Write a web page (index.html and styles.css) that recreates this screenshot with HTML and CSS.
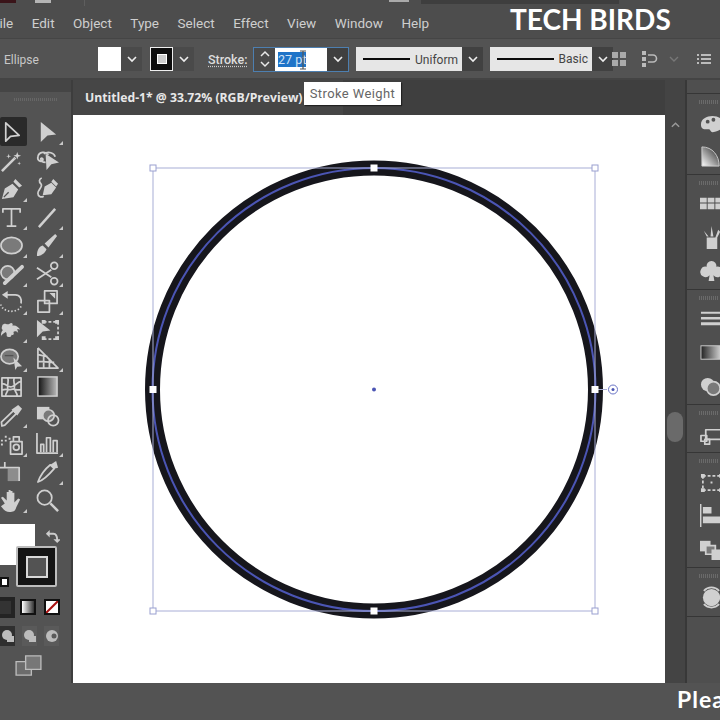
FILE: index.html
```html
<!DOCTYPE html>
<html lang="en">
<head>
<meta charset="utf-8">
<title>Illustrator</title>
<link rel="stylesheet" href="styles.css">
</head>
<body>
<div class="app">
  <div class="titlebar">
    <span class="tb-logo"></span><span class="tb-home"></span><span class="tb-sep"></span><span class="tb-arr"></span><span class="tb-field"></span>
  </div>
  <nav class="menubar">
    <span>File</span><span>Edit</span><span>Object</span><span>Type</span><span>Select</span><span>Effect</span><span>View</span><span>Window</span><span>Help</span>
  </nav>
  <div class="watermark">TECH BIRDS</div>

  <div class="control">
    <span class="ctl-name">Ellipse</span>
    <div class="swatch-group fill-group">
      <span class="swatch-white"></span>
      <span class="chev-btn"><svg viewBox="0 0 12 8" class="chev"><path d="M2 2l4 4 4-4"/></svg></span>
    </div>
    <div class="swatch-group stroke-group">
      <span class="swatch-stroke"><i></i></span>
      <span class="chev-btn"><svg viewBox="0 0 12 8" class="chev"><path d="M2 2l4 4 4-4"/></svg></span>
    </div>
    <span class="stroke-label">Stroke:</span>
    <div class="weight">
      <span class="spin"><svg viewBox="0 0 12 20" class="spin-i"><path d="M2 7l4-4 4 4M2 13l4 4 4-4"/></svg></span>
      <span class="weight-input"><span class="sel">27 pt</span></span>
      <span class="chev-btn weight-chev"><svg viewBox="0 0 12 8" class="chev"><path d="M2 2l4 4 4-4"/></svg></span>
      <svg class="ibeam" viewBox="0 0 8 20"><path d="M1 1h6M4 1v18M1 19h6"/></svg>
    </div>
    <div class="profile uniform"><span class="pline"></span><span class="ptext">Uniform</span></div>
    <span class="chev-btn profile-chev"><svg viewBox="0 0 12 8" class="chev"><path d="M2 2l4 4 4-4"/></svg></span>
    <div class="profile basic"><span class="pline"></span><span class="ptext">Basic</span></div>
    <span class="chev-btn profile-chev"><svg viewBox="0 0 12 8" class="chev"><path d="M2 2l4 4 4-4"/></svg></span>
    <svg class="ctl-grid" viewBox="0 0 16 16"><path d="M1 1h6v6H1zM9 1h6v6H9zM1 9h6v6H1zM9 9h6v6H9z"/></svg>
    <svg class="ctl-align" viewBox="0 0 18 18"><path class="solid" d="M1 1h4v4H1zM1 7h4v4H1zM1 13h4v4H1z"/><path class="line" d="M7 5h5a3 3 0 0 1 0 7H7"/></svg>
    <svg class="ctl-chev" viewBox="0 0 12 8"><path d="M2 2l4 4 4-4"/></svg>
    <svg class="ctl-list" viewBox="0 0 14 12"><path d="M0 1h2v2H0zM4 1h10v2H4zM0 5h2v2H0zM4 5h10v2H4zM0 9h2v2H0zM4 9h10v2H4z"/></svg>
  </div>

  <div class="workspace">
    <aside class="toolbox">
      <div class="tb-head"></div>
      <div class="grip tb-grip"></div>
      <div class="tools">
        <div class="tool active"><svg viewBox="0 0 24 24"><path class="o" d="M6 2v19l5-5 9-1z"/></svg></div>
        <div class="tool more"><svg viewBox="0 0 24 24"><path class="f" d="M5 1v21l7-7 9-1z"/></svg></div>
        <div class="tool"><svg viewBox="0 0 24 24"><path class="o thick" d="M2 23l13-13"/><path class="f" d="M15 8l2 2-1 1-2-2zM18 3l1 3 3 1-3 1-1 3-1-3-3-1 3-1zM9 5l.6 2 2 .6-2 .6-.6 2-.6-2-2-.6 2-.6zM20 13l.5 1.5 1.5.5-1.5.5-.5 1.5-.5-1.5-1.5-.5 1.5-.5z"/></svg></div>
        <div class="tool"><svg viewBox="0 0 24 24"><path class="o" d="M13 6c-3-4-10-3-11 2-1 4 3 6 5 4 1-2-1-3-2-2 0 3 2 4 5 4M8 5c5-3 11-1 12 3"/><path class="f" d="M10 5l14 9-8 2-5 6z"/></svg></div>
        <div class="tool more"><svg viewBox="0 0 24 24"><path class="f" d="M2 23l3-11 8-5 6 6-5 8zM14 5l2-3 7 7-3 2z"/><path class="d" d="M4 21l5-5"/></svg></div>
        <div class="tool"><svg viewBox="0 0 24 24"><path class="f" d="M7 19l2-9 7-4 5 5-5 7zM16 5l2-3 5 5-2 3z"/><path class="o" d="M6 1c-3 1-3 4-1 6 3 3-3 6-3 10 0 3 3 5 6 3"/></svg></div>
        <div class="tool more"><svg viewBox="0 0 24 24"><path class="o" d="M3 7V3h18v4M12 3v18M7 21h10"/></svg></div>
        <div class="tool more"><svg viewBox="0 0 24 24"><path class="o thick" d="M3 22L20 3"/></svg></div>
        <div class="tool more"><svg viewBox="0 0 24 24"><ellipse class="gf" cx="12" cy="12" rx="11" ry="8.5"/></svg></div>
        <div class="tool more"><svg viewBox="0 0 24 24"><path class="f" d="M1 23c0-6 2-10 6-11l4 4c-2 5-6 7-10 7zM9 10L20 0l2 2-9 12z"/></svg></div>
        <div class="tool more"><svg viewBox="0 0 24 24"><circle class="gf" cx="8" cy="11" r="7"/><path class="o thick wide" d="M5 22L23 5"/></svg></div>
        <div class="tool more"><svg viewBox="0 0 24 24"><circle class="o" cx="19" cy="4" r="3.5"/><circle class="o" cx="19" cy="20" r="3.5"/><path class="o" d="M1 6l15 10M1 18L16 8"/></svg></div>
        <div class="tool more"><svg viewBox="0 0 24 24"><path class="o" d="M7 5h9c5 0 7 5 6 9"/><path class="f" d="M8 1v8L2 5z"/><path class="o dash" d="M22 17c-3 6-14 7-19 2-1-1-2-3-2-4"/></svg></div>
        <div class="tool more"><svg viewBox="0 0 24 24"><path class="o" d="M2 11h12v12H2zM9 1h13v13H9z"/><path class="f" d="M20 3v6l-6-6z"/></svg></div>
        <div class="tool more"><svg viewBox="0 0 24 24"><path class="f" d="M3 6c2-3 4 1 7-1 2-2 4 0 3 2 3-1 6 1 8 4l-3-.5 1 4c-2-2-4-2-5-1 1 2 0 4-2 3 0 2-2 3-4 2-2-1 0-3-2-5-3 2-5 3-5 5 0-3 0-5 2-7-2-1-1-4 0-6z"/></svg></div>
        <div class="tool"><svg viewBox="0 0 24 24"><path class="f" d="M1 1v18l6-6 8-1z"/><path class="o dash2" d="M8 3h15v18H7"/><path class="f" d="M6 1h4v4H6zM20 1h4v4h-4zM20 18h4v4h-4zM6 18h4v4H6z"/></svg></div>
        <div class="tool more"><svg viewBox="0 0 24 24"><ellipse class="gf" cx="10" cy="10" rx="9" ry="7.5"/><path class="d" d="M5 9h9"/><path class="f" d="M14 11l9 9-5 .5-2 3.5z"/></svg></div>
        <div class="tool more"><svg viewBox="0 0 24 24"><path class="o" d="M2 1v21h21L2 1M2 8l10 2M2 15l17 1M8 8v14M14 13v9"/></svg></div>
        <div class="tool"><svg viewBox="0 0 24 24"><path class="o" d="M2 3h20v19H2zM2 9c6 0 6 5 11 3s6-6 9-5M8 3c2 4-1 7 0 11s-3 5-2 8M15 3c-2 3 1 7 0 10s3 5 3 9M2 16c4-2 6 0 10-1s6 2 10 0"/></svg></div>
        <div class="tool"><svg viewBox="0 0 24 24"><defs><linearGradient id="g1"><stop offset="0" stop-color="#111"/><stop offset="1" stop-color="#bbb"/></linearGradient></defs><rect class="grad" x="2" y="2" width="20" height="20" fill="url(#g1)"/></svg></div>
        <div class="tool more"><svg viewBox="0 0 24 24"><path class="o" d="M2 23l-.5-4L14 7l3 3L5 22z"/><path class="f" d="M12 6l7-5 4 4-5 7z"/></svg></div>
        <div class="tool"><svg viewBox="0 0 24 24"><rect class="f" x="1" y="3" width="13" height="13"/><circle class="gf" cx="13" cy="12" r="6"/><circle class="o" cx="18" cy="17" r="5.5"/></svg></div>
        <div class="tool more"><svg viewBox="0 0 24 24"><path class="f" d="M1 8h2v2H1zM5 8h2v2H5zM1 12h2v2H1zM5 4h2v2H5zM9 6h2v2H9z"/><path class="o" d="M11 10h12v13H11zM14 10V5h6v5"/><circle class="o" cx="17" cy="16" r="3"/></svg></div>
        <div class="tool more"><svg viewBox="0 0 24 24"><path class="o" d="M1 1v21h22"/><path class="o" d="M5 21V13h3v8M11 21V6h4v15M18 21V9h4v12"/></svg></div>
        <div class="tool"><svg viewBox="0 0 24 24"><path class="f dim" d="M8 9h12v13H8z"/><path class="o" d="M0 8h20v14M5 2v6"/></svg></div>
        <div class="tool more"><svg viewBox="0 0 24 24"><path class="o" d="M2 23c6-2 11-7 17-14l-4-4c-5 4-10 10-13 18z"/><path class="f" d="M15 5l6-4 2 7-4 1z"/></svg></div>
        <div class="tool more"><svg viewBox="0 0 24 24"><path class="f" d="M5 15L1 9l2-1 4 4V3h2v7V1h2v9V2h2v9V4h2v10l4-4 2 1-4 8c-1 4-3 5-7 5s-6-2-9-6z"/></svg></div>
        <div class="tool"><svg viewBox="0 0 24 24"><circle class="o" cx="9" cy="9" r="7.5"/><path class="o thick" d="M15 15l8 8"/></svg></div>
      </div>

      <div class="colors">
        <div class="fill-box"></div>
        <div class="stroke-box"><i></i></div>
        <svg class="swap" viewBox="0 0 16 16"><path d="M2 5h7c3 0 4 3 4 7"/><path class="h" d="M5 1v8L1 5zM9 11h8l-4 4z"/></svg>
        <span class="mini-default"><i></i></span>
      </div>
      <div class="mode-row">
        <span class="mode mode-dark"><i></i></span>
        <span class="mode mode-grad"><i></i></span>
        <span class="mode mode-none"><svg viewBox="0 0 14 14"><path d="M0 14L14 0"/></svg></span>
      </div>
      <div class="draw-row">
        <span class="draw draw-on"><svg viewBox="0 0 14 14"><circle cx="6" cy="6" r="5"/><rect x="6" y="7" width="7" height="6"/></svg></span>
        <span class="draw"><svg viewBox="0 0 14 14"><circle cx="6" cy="6" r="5"/><rect x="6" y="7" width="7" height="6"/></svg></span>
        <span class="draw"><svg viewBox="0 0 14 14"><circle cx="7" cy="7" r="6"/><circle class="hole" cx="9" cy="7" r="2.5"/></svg></span>
      </div>
      <div class="screen-row"><svg viewBox="0 0 28 22"><path d="M1 7h16v14H1z"/><path class="top" d="M11 1h16v14H11z"/></svg></div>
    </aside>

    <main class="doc">
      <div class="tabbar">
        <div class="tab">Untitled-1* @ 33.72% (RGB/Preview)</div>
        <div class="tooltip">Stroke Weight</div>
      </div>
      <div class="artboard">
        <svg class="art" viewBox="73 115 592 568">
          <circle class="ring" cx="374" cy="389.5" r="221.5"/>
          <circle class="path" cx="374" cy="389.5" r="221.5"/>
          <rect class="bbox" x="153" y="168" width="442" height="443"/>
          <path class="bbox" d="M595 389.5h12"/>
          <circle class="rot" cx="613" cy="389.5" r="4.5"/>
          <circle class="dot" cx="613" cy="389.5" r="1.5"/>
          <circle class="dot" cx="374" cy="389.5" r="2"/>
          <rect class="corner" x="150" y="165" width="6" height="6"/>
          <rect class="corner" x="592" y="165" width="6" height="6"/>
          <rect class="corner" x="150" y="608" width="6" height="6"/>
          <rect class="corner" x="592" y="608" width="6" height="6"/>
          <rect class="mid" x="371" y="165" width="6" height="6"/>
          <rect class="mid" x="371" y="608" width="6" height="6"/>
          <rect class="mid" x="150" y="386.5" width="6" height="6"/>
          <rect class="mid" x="592" y="386.5" width="6" height="6"/>
        </svg>
      </div>
    </main>

    <div class="scrollbar">
      <svg class="sb-up" viewBox="0 0 12 8"><path d="M2 6l4-4 4 4"/></svg>
      <span class="sb-thumb"></span>
    </div>

    <aside class="panels">
      <section class="psec p82">
        <div class="picon"><svg viewBox="0 0 24 24"><path class="f" d="M1 12C1 6 7 3 13 3s11 3 11 9-8 8-11 8c-2 0-2-3-4-3-3 0-8 1-8-5z"/><circle class="d2" cx="8" cy="9" r="2"/><circle class="d2" cx="14" cy="7" r="2"/></svg></div>
        <div class="picon"><svg viewBox="0 0 24 24"><defs><linearGradient id="g2" x1="0" y1="1" x2="1" y2="0"><stop offset="0" stop-color="#fff"/><stop offset="1" stop-color="#222"/></linearGradient></defs><path d="M2 2c11 0 18 9 18 20H2z" fill="url(#g2)" stroke="#ccc"/></svg></div>
      </section>
      <section class="psec p115">
        <div class="picon"><svg viewBox="0 0 24 24"><path class="f" d="M0 6h7v5H0zM8 6h7v5H8zM16 6h8v5h-8zM0 12h7v6H0zM8 12h7v6H8zM16 12h8v6h-8z"/></svg></div>
        <div class="picon"><svg viewBox="0 0 24 24"><path class="f" d="M7 12h11v12H7zM4 5l5 6H7zM12 0l2 11h-3zM19 4l2 2-3 6h-2z"/></svg></div>
        <div class="picon"><svg viewBox="0 0 24 24"><path class="f" d="M12 1a5 5 0 0 1 5 6 5.500 5.500 0 1 1-3 9l1 6H9l1-6a5.500 5.500 0 1 1-3-9 5 5 0 0 1 5-6z"/></svg></div>
      </section>
      <section class="psec p115">
        <div class="picon"><svg viewBox="0 0 24 24"><path class="f" d="M1 5h23v2H1zM1 10.500h23v2.500H1zM1 16h23v3H1z"/></svg></div>
        <div class="picon"><svg viewBox="0 0 24 24"><defs><linearGradient id="g3"><stop offset="0" stop-color="#222"/><stop offset="1" stop-color="#ddd"/></linearGradient></defs><rect x="1" y="5" width="22" height="14" fill="url(#g3)" stroke="#ccc"/></svg></div>
        <div class="picon"><svg viewBox="0 0 24 24"><circle class="f" cx="8" cy="10" r="7"/><circle class="gf" cx="14" cy="14" r="7"/></svg></div>
      </section>
      <section class="psec p48">
        <div class="picon"><svg viewBox="0 0 24 24"><path class="o" d="M6 6h18v10H6z"/><path class="o" d="M1 12h6v6H1z"/><path class="o" d="M5 16h5v5H5z"/></svg></div>
      </section>
      <section class="psec p115 pfive">
        <div class="picon"><svg viewBox="0 0 24 24"><path class="o dash2" d="M3 5h19v15H3z"/><path class="f" d="M1 3h4v4H1zM20 3h4v4h-4zM1 18h4v4H1zM20 18h4v4h-4zM11 11h2v2h-2z"/></svg></div>
        <div class="picon"><svg viewBox="0 0 24 24"><path class="f" d="M0 0h1.500v24H0zM3 3h9v7H3zM3 13h21v7H3z"/></svg></div>
        <div class="picon"><svg viewBox="0 0 24 24"><path class="f" d="M0 4h11v11H0z"/><path class="gf" d="M6 9h10v9H6z"/><path class="f" d="M12 13h12v11H12z"/></svg></div>
      </section>
      <section class="psec p49">
        <div class="picon"><svg viewBox="0 0 24 24"><circle class="f" cx="12" cy="12" r="9"/><path class="o" d="M4 5a11 11 0 0 1 16 0M4 19a11 11 0 0 0 16 0"/></svg></div>
      </section>
    </aside>
  </div>

  <div class="bottom"><span class="please">Please</span></div>
</div>
</body>
</html>
```
FILE: styles.css
```css
* { box-sizing: border-box; margin: 0; padding: 0; }
html, body { width: 720px; height: 720px; overflow: hidden; background: #535353; }
.app { position: relative; width: 720px; height: 720px; overflow: hidden; background: #535353; color: #d6d6d6; font-family: Roboto, sans-serif; }

.titlebar { height: 10px; background: #4d4d4d; display: flex; align-items: flex-start; }
.tb-logo { width: 16px; height: 3px; background: #3a1419; }
.tb-home { width: 16px; height: 3px; margin-left: 19px; background: #b5b5b5; }
.tb-sep { width: 1px; height: 6px; margin-left: 33px; background: #5e5e5e; }
.tb-arr { width: 20px; height: 2px; margin-left: 304px; background: #aaa; }
.tb-field { width: 198px; height: 4px; margin-left: 12px; background: #3e3e3e; }

.menubar { height: 29px; display: flex; align-items: center; gap: 18.500px; margin-left: -8px; padding-bottom: 3px; background: #4d4d4d; font-family: Roboto, sans-serif; font-size: 13.500px; color: #cfcfcf; border-bottom: 1px solid #454545; }
.watermark { position: absolute; left: 510px; top: 2px; font-family: Lato, sans-serif; font-weight: 700; font-size: 28px; line-height: 34px; color: #fff; white-space: nowrap; }

.control { height: 41px; display: flex; align-items: center; padding-top: 1px; background: #535353; border-bottom: 2px solid #444; font-size: 12px; }
.ctl-name { margin-left: 4px; width: 94px; padding-top: 2px; font-size: 12px; color: #c8c8c8; }
.swatch-group { display: flex; height: 24px; }
.fill-group { width: 52px; }
.stroke-group { width: 58px; }
.swatch-white { width: 23px; background: #fff; }
.swatch-stroke { width: 23px; background: #0d0d0d; border: 1px solid #eee; display: flex; align-items: center; justify-content: center; }
.swatch-stroke i { width: 10px; height: 10px; background: #ccc; border: 1px solid #fff; }
.chev-btn { display: flex; align-items: center; justify-content: center; width: 21px; background: #4a4a4a; }
.chev { width: 12px; height: 8px; fill: none; stroke: #eee; stroke-width: 1.6; }
.stroke-label { width: 45px; margin-top: 1px; font-size: 12.500px; font-weight: 500; color: #ddd; line-height: 15px; text-decoration: underline dotted #ccc; text-underline-offset: 2px; }
.weight { position: relative; display: flex; height: 25px; width: 96px; margin-right: 7px; border: 1px solid #4d7fb0; background: #4a4a4a; }
.spin { width: 21px; display: flex; align-items: center; justify-content: center; }
.spin-i { width: 12px; height: 20px; fill: none; stroke: #e8e8e8; stroke-width: 1.5; }
.weight-input { width: 52px; background: #fff; display: flex; align-items: center; padding-left: 3px; }
.sel { background: #1f74c8; color: #cfe2f5; font-size: 12.500px; line-height: 15px; white-space: nowrap; }
.weight-chev { flex: 1; background: #3f3f3f; }
.ibeam { position: absolute; left: 45px; top: 2px; width: 8px; height: 20px; fill: none; stroke: #555; stroke-width: 1.2; }
.profile { height: 24px; background: #e6e6e6; color: #444; display: flex; align-items: center; justify-content: space-between; padding: 0 4px 0 7px; font-size: 12px; }
.ptext { padding-top: 2px; }
.basic .ptext { padding-top: 0; }
.uniform { width: 106px; }
.basic { width: 102px; margin-left: 7px; }
.pline { height: 2px; width: 47px; background: #0a0a0a; }
.basic .pline { width: 57px; }
.profile-chev { height: 24px; width: 21px; background: #414141; }
.ctl-grid { width: 16px; height: 16px; margin-left: -2px; fill: #aaa; }
.ctl-align { width: 18px; height: 18px; margin-left: 14px; }
.ctl-align .solid { fill: #bbb; }
.ctl-align .line { fill: none; stroke: #bbb; stroke-width: 1.6; }
.ctl-chev { width: 12px; height: 8px; margin-left: 9px; fill: none; stroke: #777; stroke-width: 1.4; }
.ctl-list { width: 14px; height: 12px; margin-left: 17px; fill: #bbb; }

.workspace { display: flex; height: 603px; }

.toolbox { width: 73px; flex: none; border-right: 2px solid #3d3d3d; }
.tb-head { height: 12px; background: #454545; }
.grip { height: 3px; }
.tb-grip { margin: 6px 14px 5px; background: repeating-linear-gradient(90deg, #666 0 1px, transparent 1px 2px); }
.tools { display: grid; grid-template-columns: 36px 36px; grid-auto-rows: 28.300px; margin-left: -7px; margin-top: 17px; }
.tool { position: relative; display: flex; align-items: center; justify-content: center; color: #d0d0d0; }
.tool svg { width: 23px; height: 23px; overflow: visible; }
.tool.active::before { content: ""; position: absolute; left: 7px; right: 2px; top: -1px; bottom: 0; background: #2a2a2a; border-radius: 2px; }
.tool.active svg { position: relative; }
.tool.more::after { content: ""; position: absolute; right: 2px; bottom: 1px; border-style: solid; border-width: 0 0 4px 4px; border-color: transparent transparent #c8c8c8 transparent; }

.o { fill: none; stroke: #d0d0d0; stroke-width: 1.8; stroke-linejoin: round; }
.o.thick { stroke-width: 2.6; }
.o.wide { stroke-width: 4; stroke-linecap: round; }
.o.dash { stroke-dasharray: 1.5 2; }
.o.dash2 { stroke-dasharray: 3 2; }
.f { fill: #d0d0d0; }
.f.dim { fill: #8d8d8d; }
.d { fill: none; stroke: #535353; stroke-width: 1.4; }
.d2 { fill: #535353; }
.gf { fill: #7a7a7a; stroke: #d0d0d0; stroke-width: 1.8; }
.grad { stroke: #d0d0d0; stroke-width: 1.500; }

.colors { position: relative; height: 70px; margin-top: 10px; }
.fill-box { width: 35px; height: 41px; background: #fff; }
.stroke-box { position: absolute; left: 16px; top: 22px; width: 41px; height: 41px; background: #141414; border: 2px solid #bdbdbd; border-radius: 2px; display: flex; align-items: center; justify-content: center; }
.stroke-box i { width: 22px; height: 22px; background: #535353; border: 2px solid #d8d8d8; }
.swap { position: absolute; left: 45px; top: 5px; width: 15px; height: 15px; fill: none; stroke: #ccc; stroke-width: 2; }
.swap .h { fill: #ccc; stroke: none; }
.mini-default { position: absolute; left: 0; top: 53px; width: 9px; height: 10px; background: #fff; border: 2px solid #111; }
.mini-default i { display: block; }

.mode-row { display: flex; align-items: center; margin-top: 4px; height: 18px; }
.mode { display: block; width: 16px; height: 16px; border: 2px solid #111; }
.mode-dark { width: 15px; height: 21px; background: #333; border: 4px solid #232323; border-left: 0; }
.mode-grad { margin-left: 5px; background: linear-gradient(90deg, #fff, #333); }
.mode-none { margin-left: 8px; background: #fff; }
.mode-none svg { display: block; width: 12px; height: 12px; fill: none; stroke: #a11; stroke-width: 2.400; }

.draw-row { display: flex; gap: 7px; margin-top: 10px; height: 20px; }
.draw { width: 15px; height: 20px; display: flex; align-items: center; justify-content: center; background: #5a5a5a; }
.draw-on { background: #2f2f2f; }
.draw svg { width: 14px; height: 14px; fill: #bcbcbc; }
.draw .hole { fill: #5a5a5a; }

.screen-row { margin: 9px 0 0 15px; }
.screen-row svg { display: block; width: 27px; height: 21px; fill: #6c6c6c; stroke: #bcbcbc; stroke-width: 1.400; }
.screen-row .top { fill: #777; }

.doc { width: 592px; flex: none; display: flex; flex-direction: column; background: #3f3f3f; }
.tabbar { position: relative; height: 35px; background: #3f3f3f; }
.tab { width: 270px; height: 35px; padding: 0 0 1px 12px; display: flex; align-items: center; background: #464646; color: #e8e8e8; font-family: "Open Sans", sans-serif; font-size: 12.200px; font-weight: 700; white-space: nowrap; }
.tooltip { position: absolute; left: 231px; top: 2px; height: 23px; width: 97px; display: flex; align-items: center; justify-content: center; background: #fff; color: #666; font-family: Roboto, sans-serif; font-size: 13px; letter-spacing: 0.4px; box-shadow: 1px 1px 1px #222; }
.artboard { flex: 1; background: #fff; }
.art { display: block; width: 592px; height: 568px; }
.ring { fill: none; stroke: #16161c; stroke-width: 15; }
.path { fill: none; stroke: #4b55b4; stroke-width: 2; }
.bbox { fill: none; stroke: #a8add6; stroke-width: 1; }
.rot { fill: none; stroke: #6a74c6; stroke-width: 1; }
.dot { fill: #4b55b4; }
.corner { fill: #fff; stroke: #9aa0d0; stroke-width: 1; }
.mid { fill: #fff; stroke: #fff; stroke-width: 1; }

.scrollbar { position: relative; width: 22px; flex: none; background: #444; border-right: 2px solid #383838; }
.sb-up { position: absolute; left: 5px; top: 41px; width: 11px; height: 8px; fill: none; stroke: #999; stroke-width: 1.6; }
.sb-thumb { position: absolute; left: 2px; top: 332px; width: 16px; height: 30px; border-radius: 8px; background: #6a6a6a; }

.panels { flex: 1; overflow: hidden; display: flex; flex-direction: column; background: #4f4f4f; padding-top: 13px; }
.psec { flex: none; display: flex; flex-direction: column; gap: 1px; padding: 13px 0 0 13px; border-bottom: 1px solid #363636; background: repeating-linear-gradient(90deg, #6a6a6a 0 1px, transparent 1px 2px) 12px 6px / 20px 4px no-repeat; }
.p82 { height: 82px; padding-top: 14px; gap: 0; border-top: 1px solid #363636; }
.p115 { height: 115px; gap: 2px; padding-top: 12px; }
.p48 { height: 48px; padding-top: 14px; }
.p49 { height: 49px; }
.pfive { gap: 1px; padding-top: 13px; }
.picon { width: 24px; height: 32px; display: flex; align-items: center; flex: none; }
.picon svg { display: block; width: 23px; height: 23px; overflow: visible; }

.bottom { position: relative; height: 37px; background: #535353; }
.please { position: absolute; left: 677px; top: 0; font-family: Lato, sans-serif; font-weight: 700; font-size: 23px; letter-spacing: 1px; line-height: 32px; color: #fff; white-space: nowrap; }
```
